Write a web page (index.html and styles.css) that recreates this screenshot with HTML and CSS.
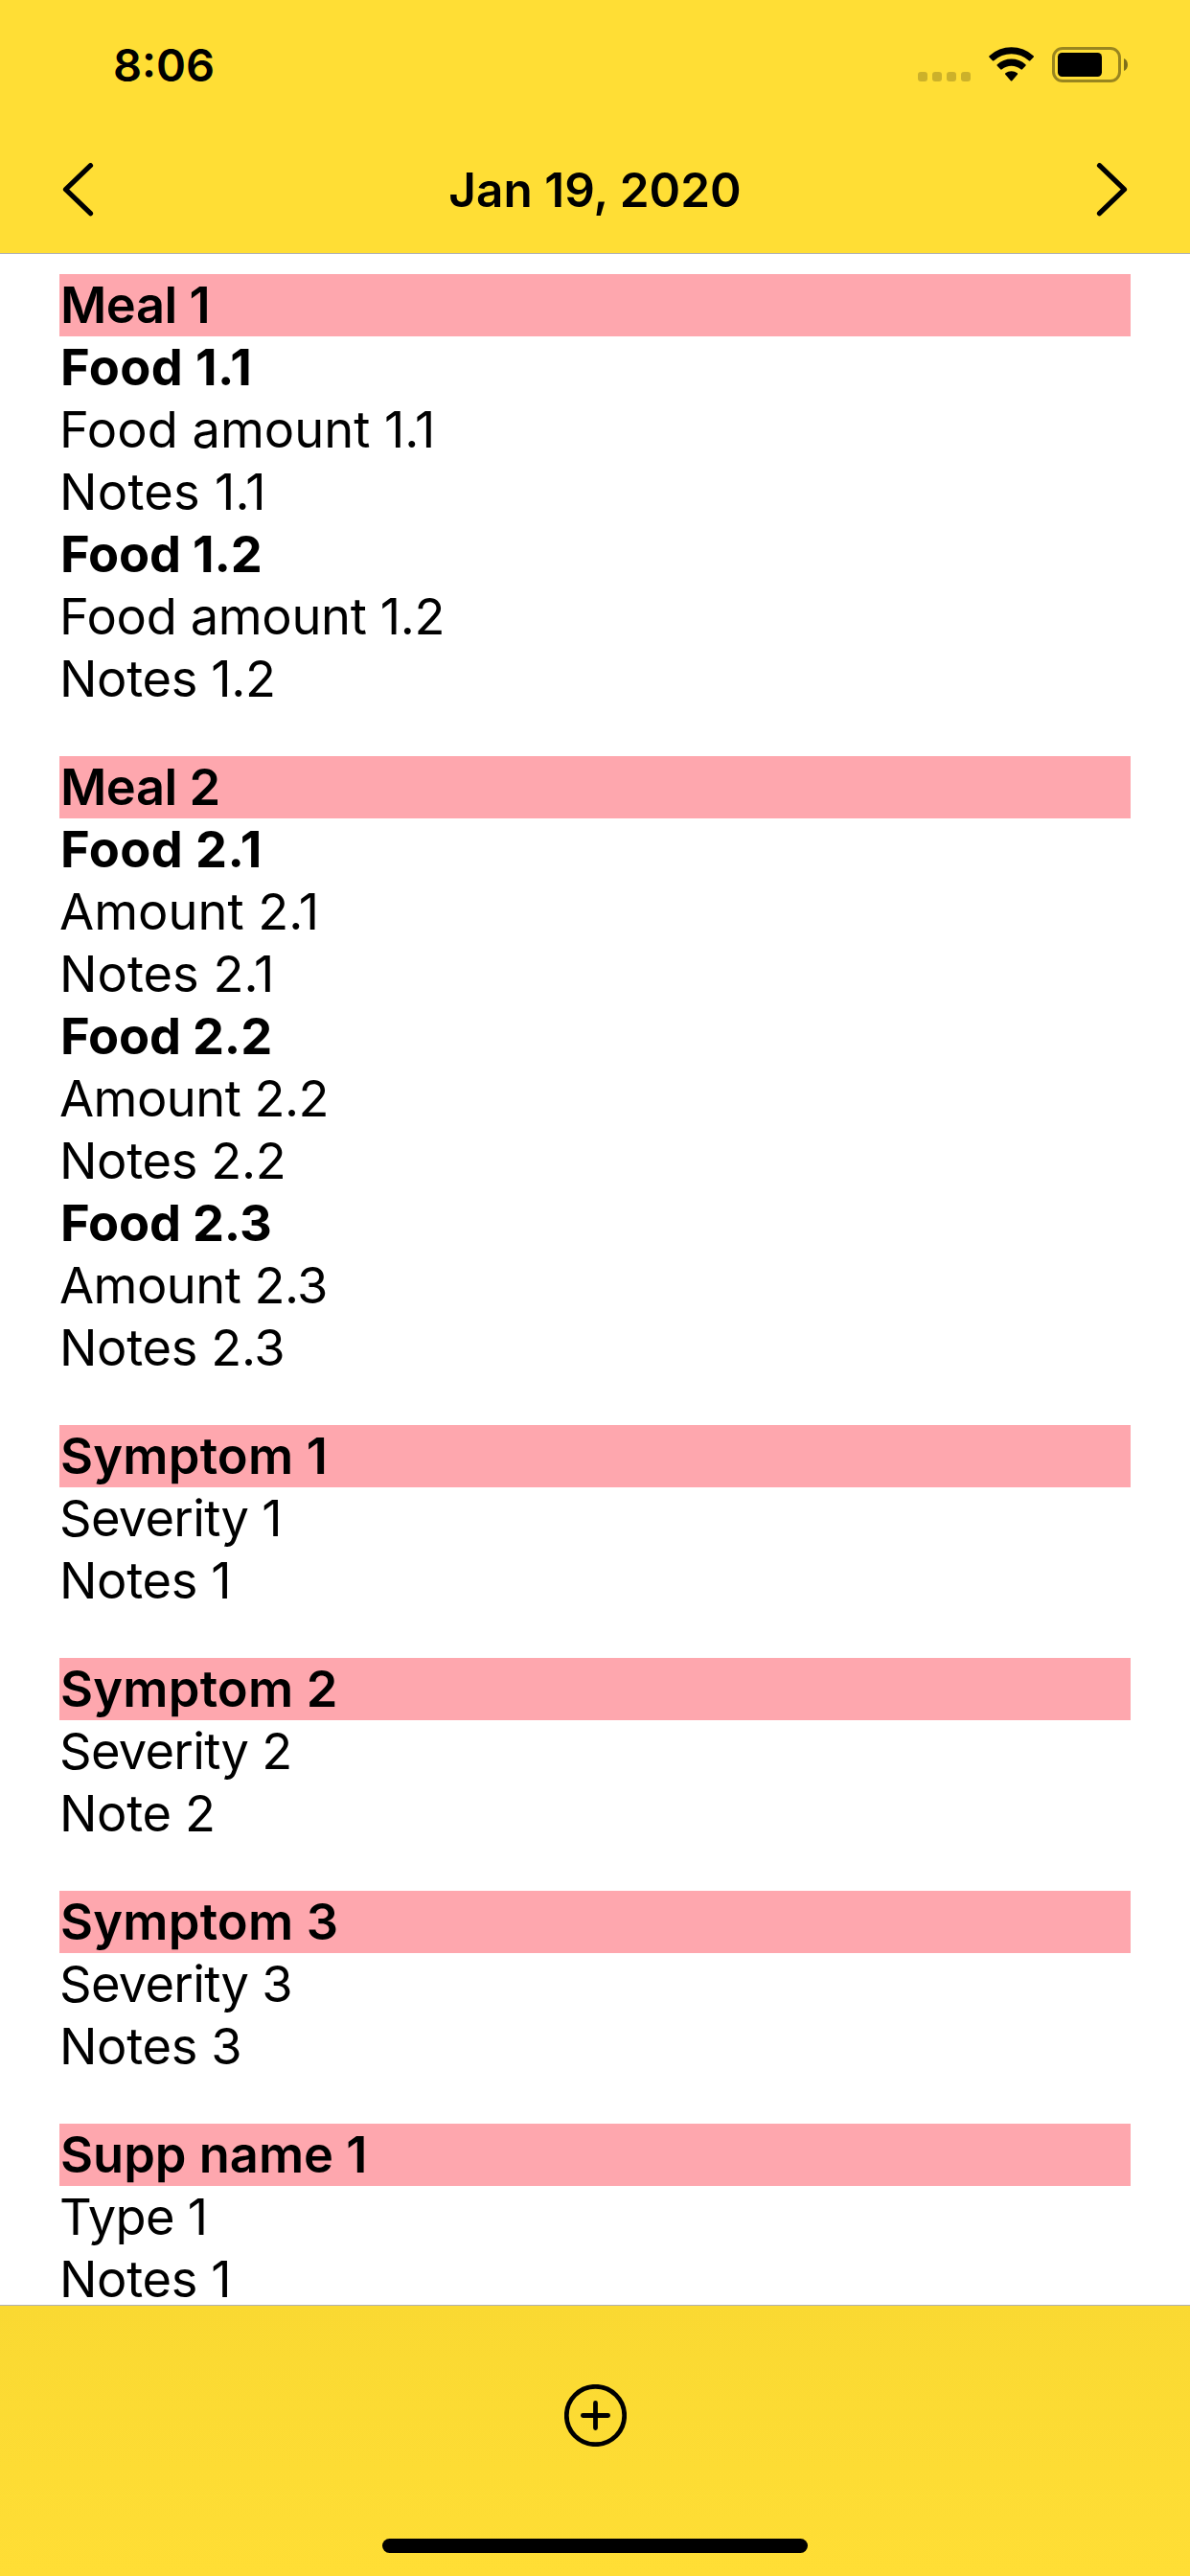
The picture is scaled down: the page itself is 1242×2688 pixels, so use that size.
FILE: index.html
```html
<!DOCTYPE html>
<html lang="en">
<head>
<meta charset="utf-8">
<title>Food Journal</title>
<link rel="stylesheet" href="styles.css">
</head>
<body>
<div class="screen">
  <header class="header">
    <div class="status">
      <time class="clock">8:06</time>
      <div class="indicators">
        <svg class="dots" width="55" height="10" viewBox="0 0 55 10"><rect width="10" height="10" rx="3"/><rect x="15" width="10" height="10" rx="3"/><rect x="30" width="10" height="10" rx="3"/><rect x="45" width="10" height="10" rx="3"/></svg>
        <svg class="wifi" width="48" height="37" viewBox="0 0 48 37">
          <path d="M0.6 10.8Q-.3 10 .6 9.2A34 34 0 0 1 46.6 9.2Q47.5 10 46.6 10.8L43.3 14.2Q42.6 15 41.8 14.2A27 27 0 0 0 5.4 14.2Q4.6 15 3.9 14.2Z"/>
          <path d="M8.8 19.8Q8 19 8.8 18.2A22 22 0 0 1 38.4 18.2Q39.2 19 38.4 19.8L35 23.3Q34.2 24 33.4 23.3A15 15 0 0 0 13.8 23.3Q13 24 12.2 23.3Z"/>
          <path d="M17.3 28.8Q16.7 28 17.4 27.3A10 10 0 0 1 29.8 27.3Q30.5 28 29.9 28.8L24.3 35.2Q23.6 35.9 22.9 35.2Z"/>
        </svg>
        <svg class="battery" width="79" height="37" viewBox="0 0 79 37">
          <rect x="1.5" y="1.5" width="69" height="34" rx="9.5" fill="none" stroke="#000" stroke-opacity=".4" stroke-width="3"/>
          <rect x="6" y="6" width="46" height="25" rx="4.5"/>
          <path d="M75 12C80.300 14 80.300 23 75 25Z" fill-opacity=".5"/>
        </svg>
      </div>
    </div>
    <nav class="nav">
      <svg class="chevron" width="33" height="56" viewBox="0 0 33 56"><path d="M29.500 2.700L3.500 27.700L29.500 52.700"/></svg>
      <h1 class="date">Jan 19, 2020</h1>
      <svg class="chevron" width="33" height="56" viewBox="0 0 33 56"><path d="M3.500 2.700L29.500 27.700L3.500 52.700"/></svg>
    </nav>
  </header>
  <main class="entries">
    <section>
      <h2 class="meal">Meal 1</h2>
      <h3 class="ones">Food 1.1</h3><p class="portion">Food amount 1.1</p><p class="ones">Notes 1.1</p>
      <h3>Food 1.2</h3><p>Food amount 1.2</p><p>Notes 1.2</p>
    </section>
    <section>
      <h2 class="meal">Meal 2</h2>
      <h3 class="ones">Food 2.1</h3><p class="portion">Amount 2.1</p><p class="portion">Notes 2.1</p>
      <h3>Food 2.2</h3><p class="amount">Amount 2.2</p><p>Notes 2.2</p>
      <h3>Food 2.3</h3><p class="amount">Amount 2.3</p><p>Notes 2.3</p>
    </section>
    <section>
      <h2 class="symptom">Symptom 1</h2>
      <p class="detail">Severity 1</p><p>Notes 1</p>
    </section>
    <section>
      <h2 class="symptom">Symptom 2</h2>
      <p class="detail">Severity 2</p><p>Note 2</p>
    </section>
    <section>
      <h2 class="symptom">Symptom 3</h2>
      <p class="detail">Severity 3</p><p>Notes 3</p>
    </section>
    <section>
      <h2>Supp name 1</h2>
      <p class="detail">Type 1</p><p>Notes 1</p>
    </section>
  </main>
  <footer class="toolbar">
    <svg class="add" width="65" height="65" viewBox="0 0 65 65"><circle cx="32.500" cy="32.500" r="30.200"/><path d="M32.500 19.400V45.600M19.400 32.500H45.600"/></svg>
    <div class="home"></div>
  </footer>
</div>
</body>
</html>
```
FILE: styles.css
```css
* { box-sizing: border-box; margin: 0; padding: 0; }
body { background: #fff; color: #000; font-family: Inter, "Liberation Sans", sans-serif; }
svg { display: block; flex: none; }

.screen { width: 1242px; height: 2688px; display: flex; flex-direction: column; overflow: hidden; }

.header { height: 265px; flex: none; background: #ffde35; border-bottom: 1px solid #b0b0b0; }
.status { height: 132px; display: flex; justify-content: space-between; padding: 0 65px 0 118px; }
.clock { padding-top: 39px; font-size: 47px; font-weight: 600; line-height: 57px; }
.indicators { display: flex; align-items: flex-start; padding-top: 49px; }
.dots { margin-top: 26px; fill-opacity: .2; }
.wifi { margin-left: 19px; }
.battery { margin-left: 18px; }

.nav { height: 132px; display: flex; align-items: center; justify-content: space-between; padding: 0 65px; }
.chevron { fill: none; stroke: #000; stroke-width: 5.2; stroke-linecap: round; stroke-linejoin: round; }
.date { font-size: 49.5px; font-weight: 600; line-height: 60px; }

.entries { flex: 1; min-height: 0; padding: 21px 62px 0; display: flex; flex-direction: column; gap: 48px; font-size: 52.4px; line-height: 65px; }
h2 { height: 65px; padding-left: 1px; background: #fea7ae; font-size: inherit; font-weight: 600; }
h3 { height: 65px; padding-left: 1px; font-size: inherit; font-weight: 700; letter-spacing: -.18px; }
p { height: 65px; letter-spacing: -.35px; }
.meal { letter-spacing: -.45px; }
.symptom { letter-spacing: .22px; }
.portion { letter-spacing: 0; }
.amount { letter-spacing: -.54px; }
.detail { letter-spacing: -.7px; }
h3.ones { letter-spacing: .43px; }
p.ones { letter-spacing: .25px; }

.toolbar { height: 283px; flex: none; display: flex; flex-direction: column; align-items: center; justify-content: space-between; padding: 82px 0 24px; border-top: 1px solid #b0b0b0; background: linear-gradient(#fad932, #ffde35); }
.add { fill: none; stroke: #000; stroke-width: 4.8; stroke-linecap: round; }
.home { width: 444px; height: 15px; border-radius: 8px; background: #000; }
```
